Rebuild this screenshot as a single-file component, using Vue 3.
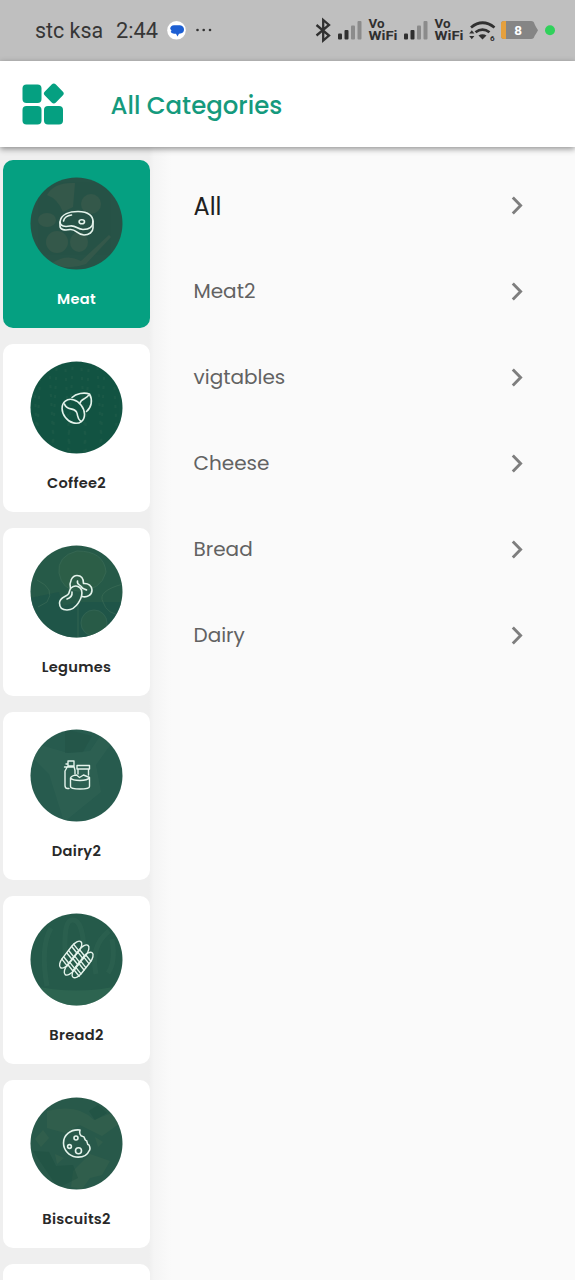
<script setup>
const categories = [
  { name: 'Meat', icon: 'meat', active: true },
  { name: 'Coffee2', icon: 'coffee' },
  { name: 'Legumes', icon: 'legumes' },
  { name: 'Dairy2', icon: 'dairy' },
  { name: 'Bread2', icon: 'bread' },
  { name: 'Biscuits2', icon: 'biscuit' },
  { name: '', icon: '' },
]
const items = [
  { name: 'All', head: true },
  { name: 'Meat2' },
  { name: 'vigtables' },
  { name: 'Cheese' },
  { name: 'Bread' },
  { name: 'Dairy' },
]
const loaves = [
  { x: 40.7, y: 41.6, r: 16.5 },
  { x: 46.6, y: 47, r: 18.5 },
  { x: 52.6, y: 52, r: 15.5 },
]
</script>

<template>
  <div class="screen">
    <header class="status">
      <span class="carrier">stc ksa</span>
      <span class="clock">2:44</span>
      <svg class="msg" width="20" height="20" viewBox="0 0 20 20">
        <circle cx="9.500" cy="9.300" r="9.300" fill="#fff" />
        <path d="M7 4.300h6q4 .8 4 4.200t-3.500 4l-1.500.3-1.500 2.600-1.500-2.600H7q-3-.4-3.300-2l.8-1-1.300-2Q3.500 4.600 7 4.300z" fill="#1d5fd3" />
      </svg>
      <svg class="dots" width="18" height="6" viewBox="0 0 18 6" fill="#333">
        <circle cx="1.500" cy="2" r="1.300" /><circle cx="7.700" cy="2" r="1.300" /><circle cx="14" cy="2" r="1.300" />
      </svg>
      <svg class="system" width="260" height="30" viewBox="0 0 260 30">
        <path d="M1.500 9l12.500 10.500-5.800 5V4l5.800 5-12.500 10.500" fill="none" stroke="#303030" stroke-width="2.300" />
        <g v-for="x in [23, 89]" :key="x" :transform="`translate(${x} 0)`">
          <rect x="0" y="17.500" width="4" height="6" rx="1" fill="#303030" />
          <rect x="6.500" y="14" width="4" height="9.500" rx="1" fill="#303030" />
          <rect x="13" y="9.500" width="4" height="14" rx="1" fill="#8b8b8b" />
          <rect x="19.500" y="5" width="4" height="18.500" rx="1" fill="#8b8b8b" />
          <text class="vo" x="30.500" y="12" textLength="16" lengthAdjust="spacingAndGlyphs">Vo</text>
          <text class="vo" x="30.500" y="24" textLength="29" lengthAdjust="spacingAndGlyphs">WiFi</text>
        </g>
        <g fill="none" stroke="#303030" stroke-width="2.700">
          <path d="M156 11.500q11.500-9.500 23.500 0" />
          <path d="M160.500 16.300q7-5.500 14 0" />
        </g>
        <path d="M163.500 19.500q4-2.500 8 0l-4 4z" fill="#303030" />
        <path d="M154.200 17.500l2.600-3.300 2.600 3.300zM154.200 20l2.600 3.300 2.600-3.300z" fill="#303030" />
        <text class="six" x="175" y="24.500">6</text>
        <path d="M190 5h27q3 0 3.500 3l1.500 3 2 3.300-2 3.400-1.500 2.300q-.5 3-3.500 3h-27q-3 0-3-3V8q0-3 3-3z" transform="translate(-1 0)" fill="#858585" />
        <path d="M191 5h-2q-3 0-3 3v12q0 3 3 3h2z" fill="#e5a03d" />
        <text class="pct" x="203" y="19" text-anchor="middle">8</text>
        <circle cx="235" cy="14.300" r="5" fill="#30d15b" />
      </svg>
    </header>

    <div class="appbar">
      <svg class="logo" width="43" height="43" viewBox="0 0 43 43" fill="#05a081">
        <rect x="0.500" y="1.500" width="19" height="18.500" rx="4" />
        <rect x="24" y="2.700" width="15.600" height="15.600" rx="3" transform="rotate(45 31.800 10.500)" />
        <rect x="0.500" y="23" width="19" height="18.500" rx="4" />
        <rect x="22" y="23" width="19" height="18.500" rx="4" />
      </svg>
      <h1>All Categories</h1>
    </div>

    <main class="content">
      <aside class="sidebar">
        <div v-for="(c, i) in categories" :key="i" class="card" :class="{ active: c.active }">
          <svg v-if="c.icon" class="round" width="93" height="93" viewBox="0 0 93 93">
            <defs>
              <clipPath :id="'clip' + i"><circle cx="46.500" cy="46.500" r="46" /></clipPath>
            </defs>
            <g :clip-path="`url(#clip${i})`">
              <template v-if="c.icon === 'meat'">
                <rect width="93" height="93" fill="#275347" />
                <g fill="#506452" opacity=".33">
                  <path d="M17 18q7-13 28-12l-2 24-10 5q-5-13-16-17z" />
                  <circle cx="61" cy="27" r="10" /><circle cx="27" cy="65" r="11" />
                  <ellipse cx="17" cy="43" rx="9" ry="7" /><ellipse cx="49" cy="65" rx="9" ry="10" />
                  <path d="M22 86q15-10 29-2l28-26 2 2-25 27q-19 7-34-1z" />
                </g>
              </template>
              <template v-else-if="c.icon === 'coffee'">
                <rect width="93" height="93" fill="#135443" />
                <g stroke="#27604c" stroke-width="2" stroke-dasharray="3 6" opacity=".4">
                  <path v-for="n in 11" :key="n" :d="`M${n * 8 - 5} ${n % 3 - 3}l${n % 2 ? 5 : -5} 96`" />
                </g>
              </template>
              <template v-else-if="c.icon === 'legumes'">
                <rect width="93" height="93" fill="#275a49" />
                <path d="M0 53l29-6 4 14 16-4 44 0v36H0z" fill="#1c5149" opacity=".6" />
                <g fill="#356447" stroke="#4b7961" opacity=".4">
                  <path d="M29 28q-2-17 18-22 27 0 29 21-5 19-28 19-16-1-19-18z" />
                  <circle cx="64" cy="78" r="13" />
                  <path d="M7 35q19 9 10 22l-9 5M93 39q-26 7-20 18 4 13 20 13M48 56v36" fill="none" />
                </g>
              </template>
              <template v-else-if="c.icon === 'dairy'">
                <rect width="93" height="93" fill="#275b4e" />
                <path d="M0 13l38 11 22-2 15-22 8 12-17 24 5 27-37 30-15-48-19-19z" fill="#356758" opacity=".4" />
                <path d="M35 0l27 7-9 16-18 1z" fill="#204e42" opacity=".35" />
              </template>
              <template v-else-if="c.icon === 'bread'">
                <rect width="93" height="93" fill="#255a4a" />
                <g fill="none" stroke="#3e7160" stroke-width="5" opacity=".22">
                  <path d="M37 62Q31 8 42 7t12 32M17 73q-7-39 4-58M66 61q-6-28 13-43M78 60q8-11 4-34" />
                </g>
                <path d="M0 72q46 11 93 0v21H0z" fill="#377058" opacity=".45" />
              </template>
              <template v-else>
                <rect width="93" height="93" fill="#28594a" />
                <g fill="#406850" opacity=".35">
                  <path d="M17 14q31-8 47 9l20-8 5 12-17 12-22-11-15 8-18-5zM43 74l17-17 20 7-8 14-12 3-8 11-11-2z" />
                  <path d="M13 33l6 8-8 9-6-8zM65 40l8 5-5 5zM25 57l9 4-7 6z" />
                </g>
                <path d="M3 54l16 1 7 14 17-1 5 13-20 10zM59 14l9-6 9 8-12 7z" fill="#174b3d" opacity=".35" />
              </template>
            </g>
            <g class="line">
              <template v-if="c.icon === 'meat'">
                <path d="M30 45c1-8 10-10.500 18-10.500 11 0 15 5 15 10 0 6-5 8-10 8-6 0-7-4.500-13-3.500-5 1-10 .5-10-4z" />
                <path d="M30 45v4c0 4 5 4.500 10 3.500 6-1 7 5.500 14 5.500 5 0 9-3 9-7v-7M33.500 44q1-5 8-6" />
                <ellipse cx="51.800" cy="44.800" rx="2.700" ry="2" />
              </template>
              <template v-else-if="c.icon === 'coffee'">
                <ellipse cx="43.300" cy="50.300" rx="10" ry="13" transform="rotate(-38 43.300 50.300)" />
                <path d="M34.500 43c2 7 9 3 12 8 2 4 0 6 4.500 9.500" />
                <path d="M42 36.500c4-4 12-5.500 17.500-3.500 3.500 6 2 13.500-3 17.500M59 33.500c-2 5-8 3.500-9 8.500" />
              </template>
              <template v-else-if="c.icon === 'legumes'">
                <path d="M41 43c4-3.500 9-2 10.500 2 2 7-5 20-14.500 20-5 0-7.500-3-7.500-7 0-5.500 6-6 8.500-8.500 2-2 1-4.500 3-6.500z" />
                <path d="M40.500 43c-1.500-6 1.500-12.500 6.500-12.500 5 0 6.500 4 6.500 8 5-.5 8.500 2.500 8.500 6.500 0 5-5 8-10 6.500M47.500 36c-1 4.500 3.500 3.500 4 6 1.500 2.500 3 1.500 5 3M42 47c.5 4-2 6-5 7" />
              </template>
              <template v-else-if="c.icon === 'dairy'">
                <g stroke-width="1.400">
                  <path d="M39 59.500h-1.500q-2.500 0-2.500-3V42l2.500-4.500M38 32h6v5h-6zM34.500 38H44M36 35h2M44 37.500l1 4V45M47 36.500h12.500v3.500H47zM48 40v5M58.500 40v6" />
                  <path d="M40.500 49v8.500q0 2.500 9.500 2.500t9.500-2.500V49M40.500 49q1-2.500 6-3l3 2.500 4-2.500 6 2.500q-2 3-9.500 3t-9.500-2.500" />
                </g>
              </template>
              <template v-else-if="c.icon === 'bread'">
                <g stroke-width="1.400">
                  <g v-for="l in loaves" :key="l.x" :transform="`translate(${l.x} ${l.y}) rotate(38)`">
                    <rect x="-4.300" :y="-l.r" width="8.600" :height="l.r * 2" rx="4.300" ry="9" />
                    <path v-for="y in [-8, 0, 8]" :key="y" :d="`M-4.200 ${y - 2}l8.400 2M-4.200 ${y + 1}l8.400 2`" />
                  </g>
                </g>
              </template>
              <template v-else>
                <path d="M50 33c-1 3 0 6 3 6.500 2 0 1 3 3 4 2 0 0 4 3 4.500 1 2 2 4 0 6-2 5-7 6.500-13 6-7-1-12.500-7-12.500-14 0-8 7-14 16.500-13z" />
                <circle cx="46" cy="41" r="2" /><circle cx="39.500" cy="49.500" r="1.900" /><circle cx="48.500" cy="53.800" r="3" />
              </template>
            </g>
          </svg>
          <span class="label">{{ c.name }}</span>
        </div>
      </aside>

      <nav class="list">
        <div v-for="it in items" :key="it.name" class="row" :class="{ head: it.head }">
          <span>{{ it.name }}</span>
          <svg width="14" height="20" viewBox="0 0 14 20" fill="none" stroke="#7e7e7e" stroke-width="2.900">
            <path d="M1.800 2.500l7.800 8-7.800 8" />
          </svg>
        </div>
      </nav>
    </main>
  </div>
</template>

<style>
html,
body {
  overflow: hidden;
}
</style>

<style scoped>
.screen {
  width: 575px;
  height: 1280px;
  overflow: hidden;
  display: flex;
  flex-direction: column;
  background: #fafafa;
  font-family: Poppins, Inter, "Liberation Sans", sans-serif;
}
.status {
  height: 61px;
  flex: none;
  display: flex;
  align-items: center;
  box-sizing: border-box;
  padding-left: 35px;
  background: #bfbfbf;
  color: #363636;
  font: 21.400px/30px Roboto, sans-serif;
}
.carrier {
  width: 81px;
  flex: none;
  white-space: nowrap;
}
.clock {
  width: 51px;
  flex: none;
  font-size: 21.800px;
}
.dots {
  margin-left: 9px;
}
.system {
  margin-left: 101px;
}
.vo {
  font: 700 12px/1 Roboto, sans-serif;
  fill: #303030;
}
.six {
  font: 700 8px Roboto, sans-serif;
  fill: #303030;
}
.pct {
  font: 700 13.500px Roboto, sans-serif;
  fill: #fff;
}
.appbar {
  height: 86px;
  flex: none;
  display: flex;
  align-items: center;
  padding-left: 22px;
  background: #fff;
  box-shadow: 0 2px 6px rgba(0, 0, 0, 0.42);
  position: relative;
  z-index: 1;
}
h1 {
  margin: 3px 0 0 45.500px;
  color: #159a7d;
  font-size: 24.400px;
  font-weight: 500;
  line-height: 36px;
  white-space: nowrap;
}
.content {
  flex: 1;
  display: flex;
  min-height: 0;
}
.sidebar {
  width: 154px;
  flex: none;
  box-sizing: border-box;
  padding: 12.700px 4px 0 3px;
  display: flex;
  flex-direction: column;
  gap: 15.500px;
  background: linear-gradient(90deg, #efefef 149px, #f5f5f5 154px);
}
.card {
  height: 168.500px;
  flex: none;
  border-radius: 10px;
  background: #fff;
  display: flex;
  flex-direction: column;
  align-items: center;
  box-sizing: border-box;
  padding-top: 17.300px;
  color: #292929;
}
.card.active {
  background: #05a081;
  color: #fff;
}
.round {
  flex: none;
}
.line {
  fill: none;
  stroke: #e4f3eb;
  stroke-width: 1.600;
  stroke-linejoin: round;
  stroke-linecap: round;
}
.label {
  margin-top: 18px;
  font-size: 14.600px;
  font-weight: 600;
  line-height: 22px;
  letter-spacing: 0.3px;
  white-space: nowrap;
}
.list {
  flex: 1;
  padding-top: 15.500px;
  background: linear-gradient(90deg, #f5f5f5, #fafafa 18px);
}
.row {
  height: 85.900px;
  display: flex;
  align-items: center;
  justify-content: space-between;
  padding: 0 50px 0 39.500px;
  color: #626262;
  font-size: 20px;
  font-weight: 400;
}
.row.head {
  color: #202020;
  font-size: 24px;
}
.row.head span {
  padding-top: 2px;
}
</style>
